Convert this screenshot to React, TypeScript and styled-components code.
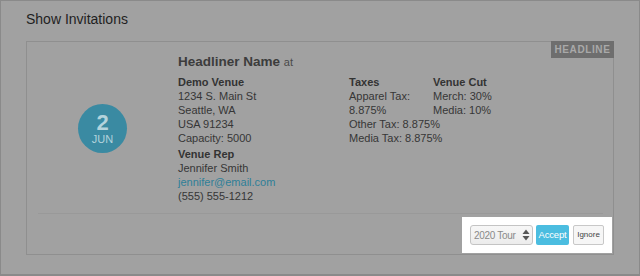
import React from "react";
import styled, { createGlobalStyle } from "styled-components";

const GlobalStyle = createGlobalStyle`
  html, body {
    margin: 0;
    padding: 0;
    background: #a1a1a1;
  }
  * {
    box-sizing: border-box;
  }
`;

function App() {
  return (
    <>
      <GlobalStyle />
      <Page>
        <Title>Show Invitations</Title>
        <Card>
          <Badge>HEADLINE</Badge>
          <CardBody>
            <DateCol>
              <DateCircle>
                <Day>2</Day>
                <Month>JUN</Month>
              </DateCircle>
            </DateCol>
            <Details>
              <Headliner>
                Headliner Name <At>at</At>
              </Headliner>
              <InfoGrid>
                <InfoCol>
                  <Label>Demo Venue</Label>
                  <Line>1234 S. Main St</Line>
                  <Line>Seattle, WA</Line>
                  <Line>USA 91234</Line>
                  <Line>Capacity: 5000</Line>
                  <Label $gap>Venue Rep</Label>
                  <Line>Jennifer Smith</Line>
                  <Link>jennifer@email.com</Link>
                  <Line>(555) 555-1212</Line>
                </InfoCol>
                <InfoCol>
                  <Label>Taxes</Label>
                  <Line $wrap>Apparel Tax: 8.875%</Line>
                  <Line>Other Tax: 8.875%</Line>
                  <Line>Media Tax: 8.875%</Line>
                </InfoCol>
                <InfoCol>
                  <Label>Venue Cut</Label>
                  <Line>Merch: 30%</Line>
                  <Line>Media: 10%</Line>
                </InfoCol>
              </InfoGrid>
            </Details>
          </CardBody>
          <Divider />
          <FooterRow>
            <Highlight>
              <TourSelect>
                <span>2020 Tour</span>
                <svg width="8" height="12" viewBox="0 0 8 12">
                  <path d="M4 0.5 L7.5 5 L0.5 5 Z" fill="#555" />
                  <path d="M4 11.5 L7.5 7 L0.5 7 Z" fill="#555" />
                </svg>
              </TourSelect>
              <AcceptButton>Accept</AcceptButton>
              <IgnoreButton>Ignore</IgnoreButton>
            </Highlight>
          </FooterRow>
        </Card>
      </Page>
    </>
  );
}

export default App;

const Page = styled.div`
  width: 640px;
  height: 276px;
  border: 1px solid #8a8a8a;
  border-bottom-width: 2px;
  padding: 9px 25px 0 25px;
  font-family: "Liberation Sans", Arial, sans-serif;
  background: #a1a1a1;
`;

const Title = styled.div`
  font-size: 14px;
  line-height: 18px;
  color: #1f1f1f;
  margin-bottom: 13px;
`;

const Card = styled.div`
  position: relative;
  border: 1px solid #8f8f8f;
  height: 214px;
`;

const Badge = styled.div`
  position: absolute;
  top: -1px;
  right: -1px;
  width: 63px;
  height: 17px;
  background: #6e6e6e;
  color: #a9a9a9;
  font-size: 10px;
  font-weight: bold;
  letter-spacing: 0.6px;
  line-height: 17px;
  text-align: center;
`;

const CardBody = styled.div`
  display: flex;
  padding-top: 11px;
`;

const DateCol = styled.div`
  width: 151px;
  display: flex;
  align-items: center;
  justify-content: center;
`;

const DateCircle = styled.div`
  width: 49px;
  height: 49px;
  border-radius: 50%;
  background: #3a8aa2;
  color: #b3d3dc;
  display: flex;
  flex-direction: column;
  align-items: center;
  justify-content: center;
`;

const Day = styled.div`
  font-size: 22px;
  font-weight: bold;
  line-height: 20px;
  margin-top: 2px;
`;

const Month = styled.div`
  font-size: 11px;
  line-height: 13px;
`;

const Details = styled.div`
  flex: 1;
`;

const Headliner = styled.div`
  font-size: 13.5px;
  font-weight: bold;
  line-height: 18px;
  color: #3c3c3c;
  margin-bottom: 4px;
`;

const At = styled.span`
  font-size: 11px;
  font-weight: normal;
  color: #4a4a4a;
`;

const InfoGrid = styled.div`
  display: grid;
  grid-template-columns: 171px 84px auto;
`;

const InfoCol = styled.div`
  font-size: 11px;
  line-height: 14px;
  color: #363636;
`;

const Label = styled.div<{ $gap?: boolean }>`
  font-weight: bold;
  color: #333;
  margin-top: ${(p) => (p.$gap ? "2px" : "0")};
`;

const Line = styled.div<{ $wrap?: boolean }>`
  white-space: ${(p) => (p.$wrap ? "normal" : "nowrap")};
`;

const Link = styled.div`
  color: #2f7f98;
`;

const Divider = styled.div`
  margin: 10px 10px 0 11px;
  border-top: 1px solid #999;
`;

const FooterRow = styled.div`
  display: flex;
  justify-content: flex-end;
  padding: 3px 1px 0 0;
`;

const Highlight = styled.div`
  display: flex;
  align-items: center;
  background: #fff;
  padding: 8px;
  gap: 3px;
`;

const TourSelect = styled.div`
  width: 63px;
  height: 20px;
  border: 1px solid #c4c4c4;
  border-radius: 3px;
  background: linear-gradient(#f7f7f7, #ececec);
  display: flex;
  align-items: center;
  justify-content: space-between;
  padding: 0 2px 0 3px;
  font-size: 10px;
  letter-spacing: -0.3px;
  color: #8a8a8a;
`;

const AcceptButton = styled.div`
  width: 33px;
  height: 20px;
  background: #4bbde0;
  border-radius: 2px;
  color: #fff;
  font-size: 9.5px;
  letter-spacing: -0.2px;
  line-height: 20px;
  text-align: center;
`;

const IgnoreButton = styled.div`
  width: 31px;
  height: 20px;
  margin-left: 1px;
  border: 1px solid #c8c8c8;
  border-radius: 2px;
  background: #f6f6f6;
  color: #444;
  font-size: 8px;
  line-height: 18px;
  text-align: center;
`;
